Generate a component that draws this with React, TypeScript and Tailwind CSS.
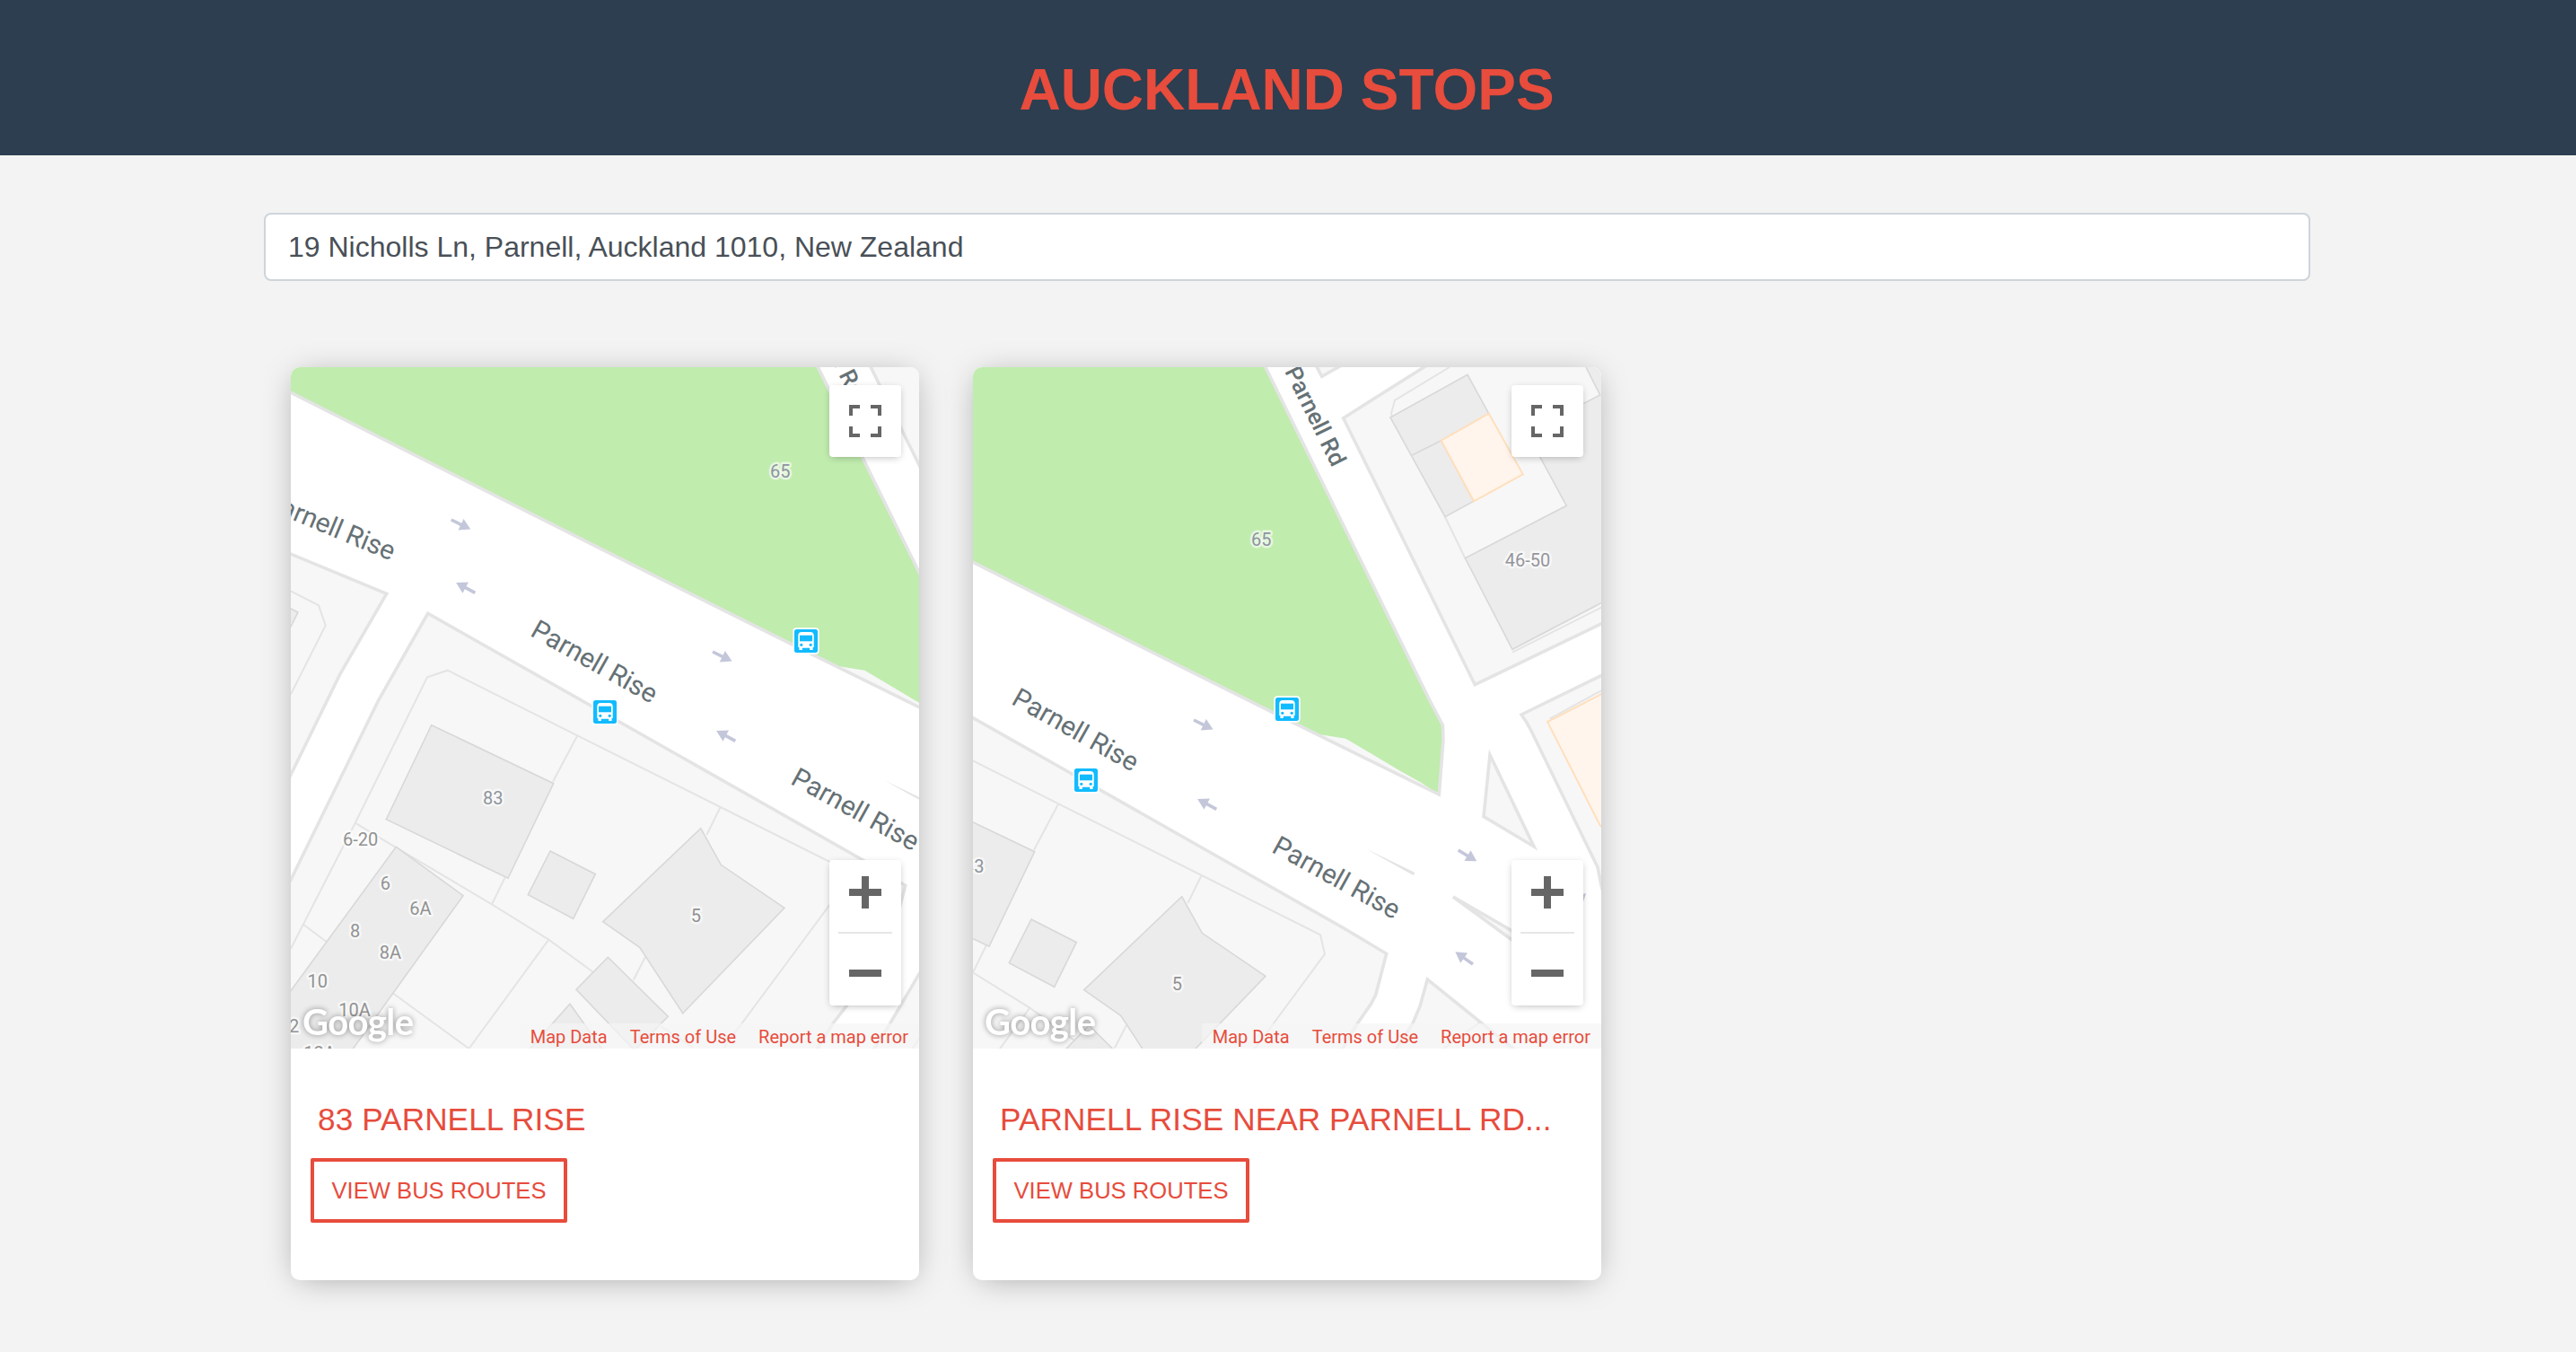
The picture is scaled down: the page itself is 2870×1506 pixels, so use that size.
import React from "react";

const LAND = "#f7f7f7";
const EDGE = "#e4e4e4";
const PARCEL = "#e4e4e4";
const BUILDING = "#ececec";
const BUILDING_EDGE = "#d8d8d8";

const landBlocks = [
  "-10,204 106.7,252.3 55.3,341 0,454 -10,474",
  "152.7,274.3 336,378 636,548.3 684.7,577.3 672.7,623.3 667,634 651.7,656 619,711.7 604,731 580,770 -30,790 -10,591.5 0,571 97.7,371",
  "730.3,606 826,683 900,780 640,775 651,757.7 667.7,731 700,676 714,655 722,636",
  "636.7,-19.3 740,-84.5 940,-90 940,202 783.3,277.7",
  "603,-84 612.7,-65.7 645,-84",
  "835,311 940,259.7 940,560 924,501 920,481 845,327 840.5,319",
];

const parcels = [
  "0,249.3 31,265.3 38.7,287.7 0,364.3",
  "0,647.7 71.7,507.7 152,345.3 174.7,337.7 319.3,410.3 478.7,490 611,556.3 616,577.7 570,640 482.7,757.7",
  "71.7,507.7 116,534.3 224,598.3 287.3,637.7 336.7,673.7",
  "412.7,734.3 447.7,757.7",
  "319.3,410.3 292,461.7",
  "238.7,568.3 224,598.3",
  "14.3,621 39.3,639.7",
  "114.3,697.7 198.5,759 287.3,637.7",
  "478.7,490 463.3,521",
  "395,657 381.7,682.7",
  "790,653 748,683",
  "700,747.7 692,760",
  "755,-76 694,-39 690,-24.3 691.5,-20",
  "750,90.7 772.3,136.7",
  "825,241.7 930,188.7",
  "866.7,315.7 930,281",
];

const buildings = [
  "-5,266.5 8,273 -5,299",
  "156.7,398.7 292.7,463.7 242,569.3 106.3,503.7",
  "117.3,534.3 192,588.7 58,775 -20,775 -20,722",
  "289,539 339.3,564.7 314.7,614.3 264.3,587.7",
  "456.7,513.7 479.3,554.3 550,602.3 436.7,719.7 388.7,646.3 347.7,617.7",
  "353.3,657.3 420.3,723.3 383,761 318,693.3",
  "311,709.3 350,764 262,764",
  "689,-20 775,-67.7 798.7,-24.3 745.7,5.7 782,73.3 750,90.7",
  "772.3,136.7 885.3,78.3 841,-3 922.7,-45 902,-86 940,-86 940,178.3 825,238.3",
];

const shops = [
  "745.7,5.7 798.7,-24.3 836.7,43.3 782,73.3",
  "864,319 940,280 940,450 922.7,434.5",
];

const arrows: [number, number, number][] = [
  [178.7, 170, 26],
  [205.3, 251.3, 208],
  [470, 317, 26],
  [495.3, 416.3, 208],
  [764.7, 462, 31],
  [781, 589, 215],
];

const numbers: [string, number, number, string][] = [
  ["65", 545.3, 123.3, "#8f93a0"],
  ["83", 225.3, 487, "#8e959c"],
  ["6-20", 77.7, 533, "#929292"],
  ["6", 105.3, 582, "#929292"],
  ["6A", 144.3, 609.7, "#929292"],
  ["8", 71.7, 635, "#929292"],
  ["8A", 111, 659.3, "#929292"],
  ["10", 29.7, 691.3, "#929292"],
  ["10A", 71, 722.7, "#929292"],
  ["12", -2, 741, "#929292"],
  ["12A", 32, 770.5, "#929292"],
  ["5", 451.3, 618.3, "#929292"],
  ["46-50", 842, 146, "#95959c"],
];

function BusStop({ x, y }: { x: number; y: number }) {
  return (
    <g transform={`translate(${x} ${y})`}>
      <rect x="-1.7" y="-1.7" width="29.4" height="29.4" rx="4" fill="#fff" />
      <rect width="26" height="26" rx="2.5" fill="#12bbff" />
      <path
        d="M4.3 7 Q4.3 3 8.3 3 H17.7 Q21.7 3 21.7 7 V20 H20.6 V23 H17.2 V20.8 H8.8 V23 H5.4 V20 H4.3 Z"
        fill="#fff"
      />
      <rect x="6" y="6.7" width="14" height="6.6" fill="#12bbff" />
      <circle cx="7.8" cy="17.3" r="1.6" fill="#12bbff" />
      <circle cx="18.2" cy="17.3" r="1.6" fill="#12bbff" />
    </g>
  );
}

function MapDrawing({ dx, dy }: { dx: number; dy: number }) {
  return (
    <svg width="700" height="759" viewBox="0 0 700 759" className="block">
      <rect width="700" height="759" fill="#fff" />
      <g transform={`translate(${dx} ${dy})`}>
        {landBlocks.map((p) => (
          <polygon key={p} points={p} fill={LAND} />
        ))}
        {parcels.map((p) => (
          <polyline key={p} points={p} fill="none" stroke={PARCEL} strokeWidth="2" />
        ))}
        {buildings.map((p) => (
          <polygon key={p} points={p} fill={BUILDING} stroke={BUILDING_EDGE} strokeWidth="1.6" />
        ))}
        <path d="M713.3 22 L745.7 5.7" stroke={BUILDING_EDGE} strokeWidth="1.6" />
        {shops.map((p) => (
          <polygon key={p} points={p} fill="#fff5ec" stroke="#ffdfbd" strokeWidth="2" />
        ))}
        {landBlocks.map((p) => (
          <polygon key={p} points={p} fill="none" stroke={EDGE} strokeWidth="3.6" />
        ))}

        {/* park block */}
        <polygon
          points="-10,23.3 356,207.7 560,309.7 743.3,400 748,340 747.5,323 732.3,294 545,-86 -10,-86"
          fill={LAND}
        />
        <polygon
          points="-10,23.3 356,207.7 560,309.7 606,333 614.3,333.7 639.3,337.7 700,373.7 723.3,386.7 743.3,400 748,340 747.5,323 732.3,294 545,-86 -10,-86"
          fill="#c0ecae"
        />
        <polygon
          points="-10,23.3 356,207.7 560,309.7 743.3,400 748,340 747.5,323 732.3,294 545,-86 -10,-86"
          fill="none"
          stroke={EDGE}
          strokeWidth="3.6"
        />

        {/* traffic islands */}
        <polygon points="800,356 849,458 793,424.5" fill={LAND} stroke={EDGE} strokeWidth="3.6" />
        <polygon points="661,460 716.5,487 714.5,490" fill={EDGE} />
        <path d="M830 555 L759 514 L830 566" fill={LAND} stroke={EDGE} strokeWidth="3.6" strokeLinejoin="bevel" />

        {arrows.map(([x, y, a]) => (
          <path
            key={`${x}-${y}`}
            transform={`translate(${x} ${y}) rotate(${a})`}
            d="M0 -1.8 H12 V-6.9 L24 0 L12 6.9 V1.8 H0 Z"
            fill="#c4c7da"
          />
        ))}
        <polygon points="902,526 907,510 900,512" fill="#c4c7da" />

        <g fontFamily="Roboto, sans-serif" fontSize="30" fill="#667175">
          <text transform="translate(-31 156.5) rotate(22.6)" textLength="154">Parnell Rise</text>
          <text transform="translate(265.5 298.5) rotate(29.4)" textLength="156">Parnell Rise</text>
          <text transform="translate(555.5 463.5) rotate(28.9)" textLength="157">Parnell Rise</text>
          <text
            transform="translate(571 -71.5) rotate(63.7)"
            textLength="120"
            fontSize="26"
            fontWeight="500"
          >
            Parnell Rd
          </text>
        </g>

        <g
          fontFamily="Roboto, sans-serif"
          fontSize="20"
          textAnchor="middle"
          stroke="#ffffff"
          strokeOpacity="0.6"
          strokeWidth="5"
          strokeLinejoin="round"
          paintOrder="stroke"
        >
          {numbers.map(([t, x, y, c]) => (
            <text key={t} x={x} y={y} fill={c}>
              {t}
            </text>
          ))}
        </g>

        <BusStop x={561} y={292} />
        <BusStop x={337} y={371} />
      </g>
    </svg>
  );
}

function StopCard({ title, dx, dy }: { title: string; dx: number; dy: number }) {
  return (
    <article className="h-[1017px] w-[700px] overflow-hidden rounded-[10px] bg-white shadow-[0_4px_36px_-8px_rgba(0,0,0,0.36)]">
      <div className="relative h-[759px] w-[700px] overflow-hidden">
        <MapDrawing dx={dx} dy={dy} />

        <svg
          width="140"
          height="56"
          viewBox="0 0 140 56"
          className="absolute bottom-0 left-2 drop-shadow-[0_0_3px_rgba(0,0,0,0.4)]"
        >
          <text
            x="5"
            y="40.5"
            textLength="124"
            fontFamily="Lato, sans-serif"
            fontWeight="700"
            fontSize="40"
            fill="#fff"
          >
            Google
          </text>
        </svg>

        <button className="absolute top-5 right-5 flex size-20 items-center justify-center rounded bg-white shadow-[0_2px_8px_-2px_rgba(0,0,0,0.3)]">
          <svg width="36" height="36" viewBox="0 0 36 36" fill="#666">
            <path d="M0 0H12V4H4V12H0Z M24 0H36V12H32V4H24Z M0 24H4V32H12V36H0Z M32 24H36V36H24V32H32Z" />
          </svg>
        </button>

        <div className="absolute right-5 bottom-12 flex w-20 flex-col items-center rounded bg-white shadow-[0_2px_8px_-2px_rgba(0,0,0,0.3)]">
          <button className="flex h-20 w-20 items-center justify-center pb-2">
            <svg width="36" height="36" viewBox="0 0 36 36" fill="#666">
              <path d="M14 0H22V14H36V22H22V36H14V22H0V14H14Z" />
            </svg>
          </button>
          <div className="h-0.5 w-15 bg-[#e6e6e6]" />
          <button className="flex h-20 w-20 items-center justify-center pt-2">
            <svg width="36" height="8" viewBox="0 0 36 8" fill="#666">
              <rect width="36" height="8" />
            </svg>
          </button>
        </div>

        <div className="absolute right-0 bottom-0 flex h-7 bg-[#f5f5f5]/70 font-[Roboto,sans-serif] text-[20px] leading-[30px] whitespace-nowrap text-[#e74c3c]">
          <a className="pr-[13px] pl-3">Map Data</a>
          <a className="pr-[13px] pl-3">Terms of Use</a>
          <a className="px-3">Report a map error</a>
        </div>
      </div>

      <div className="flex flex-col items-start pt-[58px] pl-[22px]">
        <h2 className="pl-2 text-[35.2px] leading-[42px] tracking-[0.08px] text-[#e74c3c]">{title}</h2>
        <button className="mt-[22px] flex h-[72px] w-[286px] items-center justify-center rounded-[2px] border-4 border-[#e74c3c] text-[25.6px] whitespace-nowrap text-[#e74c3c]">
          VIEW BUS ROUTES
        </button>
      </div>
    </article>
  );
}

export default function App() {
  return (
    <div className="min-h-[1506px] bg-[#f3f3f3] font-['Liberation_Sans',Arial,sans-serif]">
      <header className="flex h-[173px] justify-center bg-[#2c3e50] pt-[62px] pr-[3px]">
        <h1 className="text-[64px] leading-[76px] font-bold text-[#e74c3c]">AUCKLAND STOPS</h1>
      </header>
      <main className="mx-auto w-[2282px] pt-16">
        <input
          readOnly
          value="19 Nicholls Ln, Parnell, Auckland 1010, New Zealand"
          className="block h-[76px] w-[2280px] rounded-lg border-2 border-[#ced4da] bg-white pr-6 pl-[25px] text-[32px] text-[#495057] outline-none"
        />
        <section className="mt-24 flex gap-[60px] pl-[30px]">
          <StopCard title="83 PARNELL RISE" dx={0} dy={0} />
          <StopCard title="PARNELL RISE NEAR PARNELL RD..." dx={-224} dy={76} />
        </section>
      </main>
    </div>
  );
}
